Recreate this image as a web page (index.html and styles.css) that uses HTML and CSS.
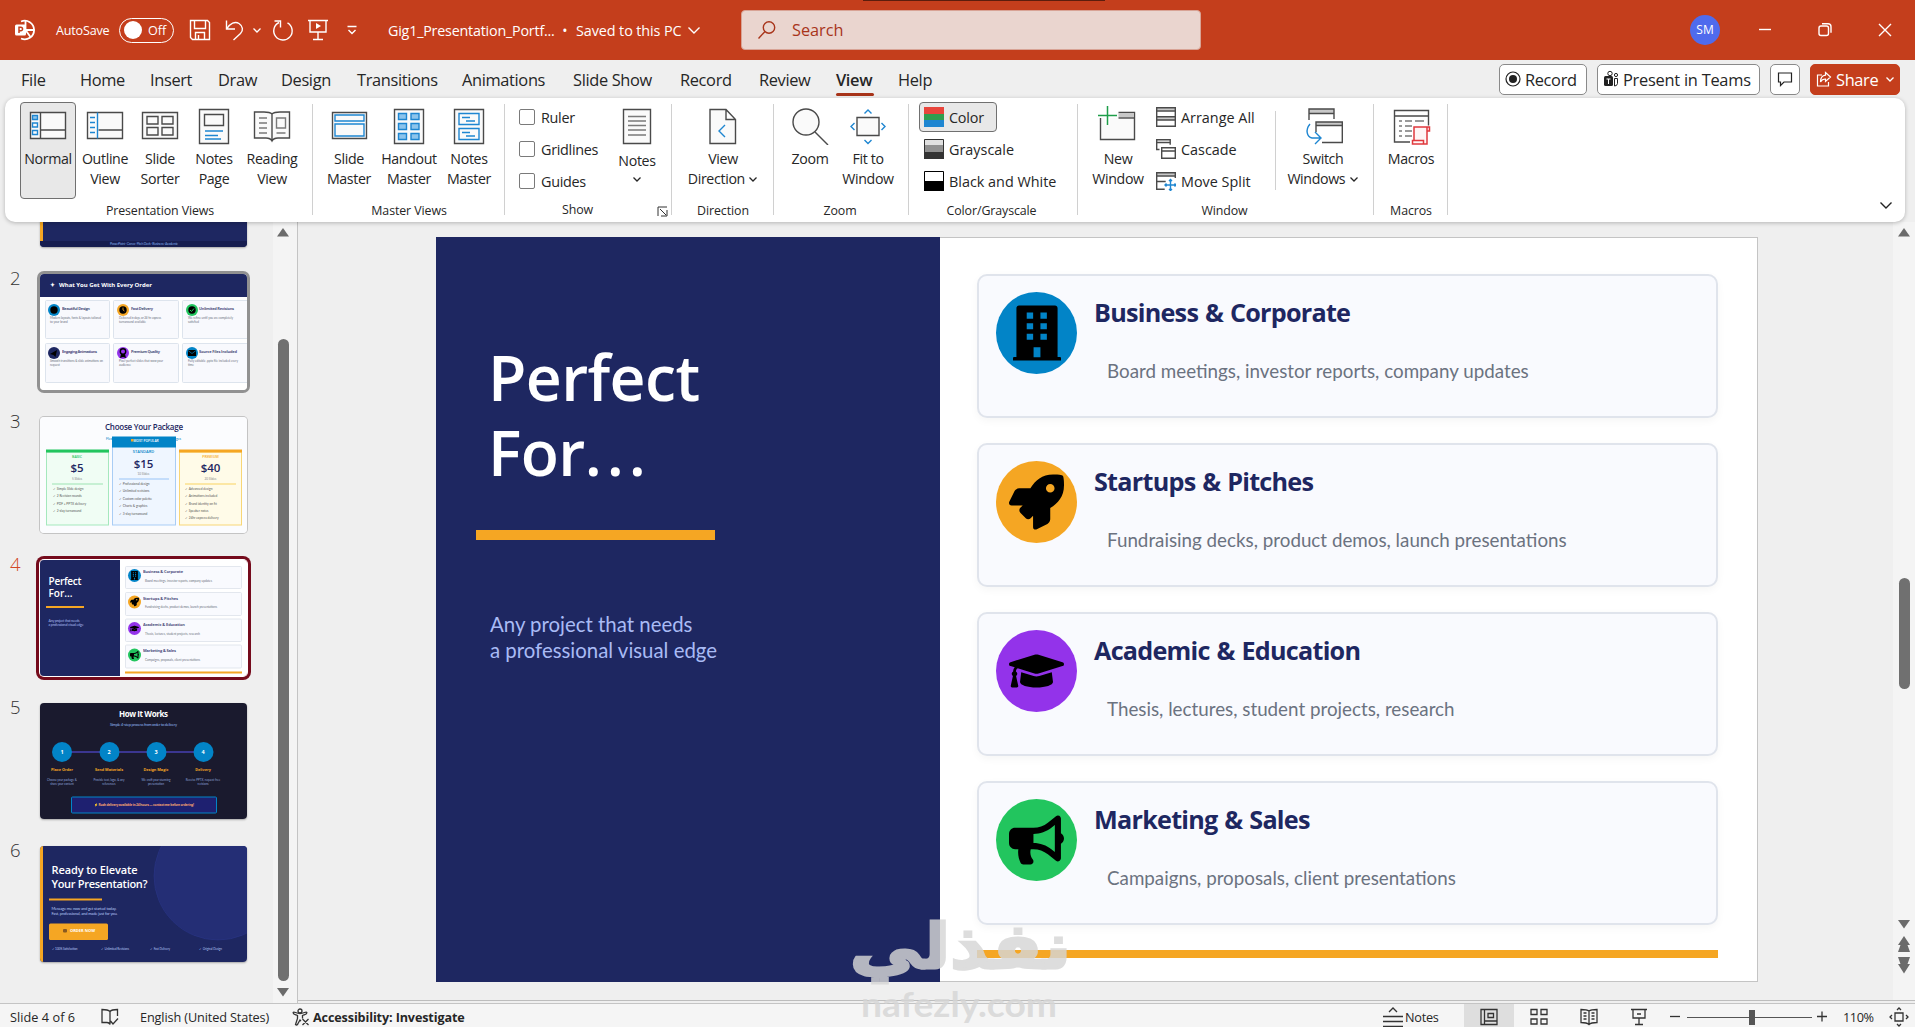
FILE: index.html
```
<!DOCTYPE html>
<html lang="en">
<head>
    <meta charset="UTF-8">
    <meta name="viewport" content="width=device-width, initial-scale=1.0">
    <title>Gig1_Presentation_Portfolio</title>
    <link rel="stylesheet" href="styles.css">
</head>
<body>
    <!-- shared icons -->
    <svg class="defs">
        <symbol id="building" viewBox="0 0 448 512">
            <path fill-rule="evenodd" d="M436 480h-20V24c0-13-11-24-24-24H56C43 0 32 11 32 24v456H12c-7 0-12 5-12 12v20h448v-20c0-7-5-12-12-12zM128 64h60v58h-60zM256 64h60v58h-60zM128 164h60v58h-60zM256 164h60v58h-60zM128 262h60v58h-60zM256 262h60v58h-60zM192 388h64v94h-64z"/>
        </symbol>
        <symbol id="rocket" viewBox="0 0 512 512">
            <path d="M505.1 19.1c-1.2-5.5-6.7-11-12.2-12.2C460.7 0 435.5 0 410.4 0 307.2 0 245.3 55.2 199.1 128H94.8c-16.3 0-35.6 11.9-42.9 26.5L2.5 253.3A28.4 28.4 0 0 0 0 264a24 24 0 0 0 24 24h103.8l-22.5 22.5c-11.4 11.4-13 32.3 0 45.2l50.9 50.9c11.2 11.2 32.2 13.2 45.3 0l22.5-22.5V488a24 24 0 0 0 24 24 28.6 28.6 0 0 0 10.7-2.5l98.7-49.4c14.6-7.3 26.5-26.5 26.5-42.9V312.8c72.6-46.3 128-108.4 128-211.1.1-25.2.1-50.4-6.8-82.6zM384 168a40 40 0 1 1 40-40 40 40 0 0 1-40 40z"/>
        </symbol>
        <symbol id="cap" viewBox="0 0 640 512">
            <path d="M622.3 153.2L343.4 67.5c-15.2-4.7-31.6-4.7-46.8 0L17.7 153.2c-23.5 7.2-23.5 38.4 0 45.6l48.6 14.9c-10.7 13.2-17.2 29.3-17.9 46.9C38.8 266.2 32 276.1 32 288c0 10.8 5.7 19.9 13.9 25.7L20.3 428.5C18.1 438.5 25.7 448 35.9 448h56.1c10.2 0 17.8-9.5 15.6-19.5L82.1 313.7C90.3 307.9 96 298.8 96 288c0-11.6-6.5-21.3-15.7-26.9.8-15 8.4-28.3 20.7-36.7L296.6 284.5c9.1 2.8 26.4 6.3 46.8 0l278.9-85.7c23.6-7.2 23.6-38.4 0-45.6zM352.8 315.1c-28.5 8.8-52.8 3.9-65.6 0l-145-44.6L128 384c0 35.4 86 64 192 64s192-28.7 192-64l-14.2-113.5-145 44.6z"/>
        </symbol>
        <symbol id="bullhorn" viewBox="0 0 576 512">
            <path d="M576 240c0-23.6-13-44-32-55.1V32c0-8.7-7-32-32-32-7.1 0-14.2 2.4-20 7l-85 68C364.3 109.2 310.7 128 256 128H64c-35.4 0-64 28.7-64 64v96c0 35.4 28.7 64 64 64h33.7c-1.4 10.5-2.2 21.1-2.2 32 0 39.8 9.3 77.4 25.6 110.9 5.2 10.7 16.5 17.1 28.4 17.1h74.3c26 0 41.7-29.8 25.9-50.6-16.4-21.5-26.2-48.4-26.2-77.4 0-11.1 1.6-21.8 4.4-32H256c54.7 0 108.3 18.8 151 53l85 68a32 32 0 0 0 20 7c24.9 0 32-22.8 32-32V295.1c19.1-11.1 32-31.5 32-55.1zm-96 141.4L447 355C393 311.8 325.1 288 256 288v-96c69.1 0 137-23.8 191-67l33-26.4v282.8z"/>
        </symbol>
        <symbol id="chev" viewBox="0 0 10 10"><path d="M1.5 3.5L5 7l3.5-3.5" fill="none" stroke="currentColor" stroke-width="1.3"/></symbol>
    </svg>

    <header class="titlebar">
        <svg class="logo" width="24" height="24" fill="none" stroke="#fff" stroke-width="1.8">
            <path d="M8 3.5a9.3 9.3 0 1 1 0 17"/><path d="M12.5 3v9h9M12.5 12l5 7"/>
            <rect x="2" y="6.5" width="11" height="11" rx="1.5" fill="#fff" stroke="none"/>
            <path d="M6 15V9.2h1.8a1.7 1.7 0 0 1 0 3.5H6" stroke="#c43e1c" stroke-width="1.5"/>
        </svg>
        <span class="autosave">AutoSave</span>
        <span class="toggle"><i></i>Off</span>
        <svg class="t-save" width="24" height="24"><path d="M2.5 2.5h17l2 2v17h-17l-2-2zM6.5 2.500v8h11v-8M7.5 21.500v-7h9v7M10.5 21v-4"/></svg>
        <svg class="t-undo" width="24" height="24"><path d="M3.5 2.5v8.500h8.500M4 10.500c3-5 8-7.500 12-5 4 2.500 4.500 7 1.500 10L10.500 22"/></svg>
        <svg class="t-chev" width="10" height="10"><use href="#chev"/></svg>
        <svg class="t-redo" width="24" height="24"><path d="M8 4.500a9.200 9.200 0 1 0 8.500 0.300M3.500 3h6v6.500"/></svg>
        <svg class="t-show" width="24" height="24"><path d="M2 2.500h20M4 2.500v11.500h16v-11.500M12 14v7.500M7 21.500h10"/><path d="M10 5v6l5-3z" fill="#fff" stroke="none"/></svg>
        <svg class="t-more" width="12" height="12"><path d="M1.5 2.500h9M2.500 6l3.500 3.500L9.500 6"/></svg>
        <span class="doc-name">Gig1_Presentation_Portf...</span>
        <span class="dot">•</span>
        <span class="saved">Saved to this PC</span>
        <svg class="t-down" width="14" height="14"><path d="M1.500 4.500l5.500 5.500 5.500-5.500"/></svg>
        <div class="search">
            <svg width="20" height="20"><circle cx="12" cy="7.500" r="5.700"/><path d="M8 11.500L1.500 18.500"/></svg>
            <span>Search</span>
        </div>
        <span class="avatar">SM</span>
        <svg class="w-min" width="24" height="24"><path d="M6 11.500h12"/></svg>
        <svg class="w-max" width="24" height="24"><rect x="6" y="8" width="9.500" height="9.500" rx="2"/><path d="M9 5.800h6a3 3 0 0 1 3 3v6"/></svg>
        <svg class="w-close" width="24" height="24"><path d="M6 6l12 12M18 6L6 18"/></svg>
        <div class="top-mark"></div>
    </header>

    <nav class="tabs">
        <a>File</a><a>Home</a><a>Insert</a><a>Draw</a><a>Design</a><a>Transitions</a><a>Animations</a><a>Slide Show</a><a>Record</a><a>Review</a><a class="active">View</a><a>Help</a>
        <div class="tab-actions">
            <button class="b-record"><svg width="16" height="18"><circle cx="8" cy="9" r="7" fill="none" stroke="#222" stroke-width="1.200"/><circle cx="8" cy="9" r="4" fill="#222"/></svg>Record</button>
            <button class="b-teams"><svg width="16" height="18"><rect x="1" y="6" width="9" height="10" rx="1.500" fill="#222"/><circle cx="7" cy="3.500" r="2.200" fill="none" stroke="#222"/><circle cx="13" cy="5" r="1.600" fill="none" stroke="#222"/><path d="M11.500 8.500h3v5a3 3 0 0 1-3 2.500z" fill="none" stroke="#222"/><path d="M3.500 9h4M5.500 9v5" stroke="#fff"/></svg>Present in Teams</button>
            <button class="b-comment"><svg width="16" height="18"><path d="M1.500 3h13v9H7l-3.500 3.500V12h-2z" fill="none" stroke="#222" stroke-width="1.200"/></svg></button>
            <button class="b-share"><svg width="16" height="18" fill="none" stroke="#fff" stroke-width="1.200"><path d="M6 5H1.500v11h11v-4"/><path d="M9.500 2.500l5 4.500-5 4.500V9C7 9 5.500 10 4.500 12c0-4 2-6.500 5-6.800z"/></svg>Share<svg class="share-chev" width="10" height="10"><use href="#chev"/></svg></button>
        </div>
    </nav>

    <section class="ribbon">
        <div class="group g-views">
            <div class="tools">
                <div class="tool on"><svg width="40" height="40"><path class="k" d="M2.500 7.500h35v26h-35zM12.500 7.500v26M12.500 25h25"/><path class="b" fill="#8cc4ec" d="M4.500 10.500h5v4h-5z"/><path class="b" d="M4.500 18h5v4h-5zM4.500 25.500h5v4h-5z"/></svg><span>Normal</span></div>
                <div class="tool"><svg width="40" height="40"><path class="k" d="M2.500 7.500h35v26h-35zM13.500 25h24"/><path class="b" d="M12.500 7.500v26M5 12.500h5M5 17.500h5M5 22.500h5M5 27.500h5"/></svg><span>Outline<br>View</span></div>
                <div class="tool t54"><svg width="40" height="40"><path class="k" d="M2.500 7.500h35v26h-35zM7 11.500h11v7.500H7zM22 11.500h11v7.500H22zM7 22.500h11v7.500H7zM22 22.500h11v7.500H22z"/></svg><span>Slide<br>Sorter</span></div>
                <div class="tool t54"><svg width="40" height="40"><path class="k" d="M5.500 4.500h29v34h-29zM10.500 9.500h19v11h-19z"/><path class="b" d="M11 26h18M11 30.500h13M11 34h16"/></svg><span>Notes<br>Page</span></div>
                <div class="tool t62"><svg width="40" height="40"><path class="k" d="M20 9c-2-2-5-2-8-2H2.500v26H14c3 0 5 1 6 3 1-2 3-3 6-3h11.500V7H28c-3 0-6 0-8 2zM20 9v26"/><path class="g" d="M7 13h8M7 18h8M7 23h8M7 28h8M24.500 13h9v10h-9zM24.500 28h9"/></svg><span>Reading<br>View</span></div>
            </div>
            <div class="label">Presentation Views</div>
        </div>
        <div class="group g-master">
            <div class="tools">
                <div class="tool"><svg width="40" height="40"><path class="k" d="M3.500 7.500h34v26h-34z"/><path class="b" d="M6 10h29v6H6zM6 19h29v12H6z"/></svg><span>Slide<br>Master</span></div>
                <div class="tool t62"><svg width="40" height="40"><path class="k" d="M5.500 4.500h29v34h-29z"/><path class="b" fill="#8cc4ec" d="M9.500 8.500h8v6h-8zM22 8.500h8v6h-8zM9.500 18.500h8v6h-8zM22 18.500h8v6h-8zM9.500 28.500h8v6h-8zM22 28.500h8v6h-8z"/></svg><span>Handout<br>Master</span></div>
                <div class="tool"><svg width="40" height="40"><path class="k" d="M5.500 4.500h29v34h-29z"/><path class="b" d="M10 8.500h20v11H10zM10 23.500h20v11H10zM13 12.500h8M17 16h9M13 27.500h8M17 31h9"/></svg><span>Notes<br>Master</span></div>
            </div>
            <div class="label">Master Views</div>
        </div>
        <div class="group g-show">
            <div class="tools">
                <div class="checks">
                    <label><i></i>Ruler</label>
                    <label><i></i>Gridlines</label>
                    <label><i></i>Guides</label>
                </div>
                <div class="tool t-notes"><svg width="40" height="40"><path class="k" d="M6.500 4.500h27v34h-27z"/><path class="g" d="M11 11.500h18M11 16h18M11 20.500h18M11 25h18M11 30h18"/></svg><span>Notes</span><svg width="10" height="10"><use href="#chev"/></svg></div>
            </div>
            <div class="label">Show<svg class="launcher" width="11" height="11"><path d="M1 10V1h9M3 3l6 6M10 4v6H4" fill="none" stroke="#333"/></svg></div>
        </div>
        <div class="group g-dir">
            <div class="tools">
                <div class="tool"><svg width="40" height="40"><path class="k" d="M7 4.500h16l9.500 10v24H7zM23 4.500v10h9.500"/><path class="b" d="M22 20l-6 6 6 6"/></svg><span>View<br>Direction <svg width="10" height="10"><use href="#chev"/></svg></span></div>
            </div>
            <div class="label">Direction</div>
        </div>
        <div class="group g-zoom">
            <div class="tools">
                <div class="tool"><svg width="40" height="40"><circle class="k" cx="16" cy="17" r="13"/><path class="k" d="M25 27l13 13"/></svg><span>Zoom</span></div>
                <div class="tool"><svg width="40" height="40"><path class="k" d="M9 12.500h22v18H9z"/><path class="b" d="M16.500 8.500L20 5l3.500 3.500M16.500 35l3.500 3.500 3.500-3.500M6.500 18L3 21.500 6.500 25M33.500 18l3.500 3.500-3.500 3.500"/></svg><span>Fit to<br>Window</span></div>
            </div>
            <div class="label">Zoom</div>
        </div>
        <div class="group g-color">
            <div class="tools list">
                <div class="row on"><svg width="20" height="20"><path fill="#e8453c" d="M0 0h20v7H0z"/><path fill="#2e9e4f" d="M0 7h20v6H0z"/><path fill="#1e86d1" d="M0 13h20v7H0z"/></svg>Color</div>
                <div class="row"><svg width="20" height="20"><path fill="#e0e0e0" d="M0 0h20v7H0z"/><path fill="#909090" d="M0 6h20v7H0z"/><path fill="#333" d="M0 13h20v7H0z"/><path fill="none" stroke="#333" d="M.5.5h19v19H.5z"/></svg>Grayscale</div>
                <div class="row"><svg width="20" height="20"><path fill="#fff" stroke="#000" d="M.5.5h19v19H.5z"/><path d="M0 10h20v10H0z"/></svg>Black and White</div>
            </div>
            <div class="label">Color/Grayscale</div>
        </div>
        <div class="group g-window">
            <div class="tools">
                <div class="tool"><svg width="40" height="40"><path class="k" d="M2.500 13v21.500h34v-27h-16"/><path fill="#c8c8c8" d="M20.500 8h15.500v4.500H20.500z"/><path class="k" d="M20.500 13h16"/><path d="M9.500 1v19M0 10.500h19" stroke="#fff" stroke-width="5"/><path d="M9.500 1v19M0 10.500h19" stroke="#1e9e4a" stroke-width="1.500"/></svg><span>New<br>Window</span></div>
                <div class="list">
                    <div class="row"><svg width="20" height="20"><path fill="#c8c8c8" d="M.5.5h19v3H.5zM.5 10h19v3H.5z"/><path class="k" d="M.7.7h18.600v18.600H.7zM.7 4h18.600M.7 9.800h18.600M.7 13h18.600"/></svg>Arrange All</div>
                    <div class="row"><svg width="20" height="20"><path class="k" d="M3.500 10.500H.7V.7h13.500v5M.7 3.500h13.500M5.700 8.700h13.600v10.600H5.700zM5.700 12h13.600"/></svg>Cascade</div>
                    <div class="row"><svg width="20" height="20"><path fill="#c8c8c8" d="M.5 1.500h19v3H.5z"/><path class="k" d="M19.300 7V1.700H.7v16.600h8M.7 5h18.600M.7 10.500h9"/><path class="b" d="M14.500 8.500v11M9 14h11M13 10l1.500-1.500L16 10M13 18l1.500 1.500L16 18M10.500 12.500L9 14l1.500 1.500M18.500 12.500L20 14l-1.500 1.500"/></svg>Move Split</div>
                </div>
                <div class="tool t-switch"><svg width="40" height="40"><path fill="#c8c8c8" d="M6 4h25v4H6zM13 17h26v3H13z"/><path class="k line" d="M6 15V4h25v10M6 8.500h25M13 27V17h26.300v20.500H19M13 20.500h26"/><path class="b" d="M7 19c-5 6-3 13 2 14h8M12 27l6 6-6 6"/></svg><span>Switch<br>Windows <svg width="10" height="10"><use href="#chev"/></svg></span></div>
            </div>
            <div class="label">Window</div>
        </div>
        <div class="group g-macros">
            <div class="tools">
                <div class="tool"><svg width="40" height="40"><path class="k line" d="M19 37H3.500V5.500h34v15M3.500 11h34"/><path class="g" d="M8 16h3M14 16h7M24 16h9M8 21h3M14 21h7M8 26h3M14 26h7M8 31h3M14 31h7"/><path d="M23 36V22h15.500v4H36v13H21.500v-3.500h11V39M36 26v-4" fill="#fff5f5" stroke="#e0393e" stroke-width="1.500"/></svg><span>Macros</span></div>
            </div>
            <div class="label">Macros</div>
        </div>
        <svg class="collapse" width="14" height="14"><path d="M1.500 4.500l5.500 5.500 5.500-5.500" fill="none" stroke="#222" stroke-width="1.400"/></svg>
    </section>

    <main class="workspace">
        <aside class="panel">
            <div class="thumbs">
                <div class="item first"><span class="num"></span>
                    <svg class="thumb" viewBox="0 0 207 116"><rect width="207" height="116" fill="#1e2761"/><rect width="3" height="110" fill="#f5a623"/><rect y="110" width="207" height="6" fill="#161d4f"/><text x="70" y="113.500" font-size="3.500" fill="#7ea4e0" textLength="68">PowerPoint · Canva · Pitch Deck · Business · Academic</text></svg>
                </div>
                <div class="item seen"><span class="num">2</span>
                    <svg class="thumb" viewBox="0 0 207 116">
                        <rect width="207" height="116" fill="#fff"/><rect width="207" height="23" fill="#1e2761"/>
                        <text class="h" x="10" y="13" font-size="5.500" fill="#fff">✦</text>
                        <text class="h" x="19" y="13" font-size="6" fill="#fff" textLength="93">What You Get With Every Order</text>
                        <g fill="#f8f9fd" stroke="#d6dde8" stroke-width=".8"><rect x="5.500" y="26.500" width="64" height="38" rx="1"/><rect x="73.500" y="26.500" width="65" height="38" rx="1"/><rect x="142.500" y="26.500" width="70" height="38" rx="1"/><rect x="5.500" y="69.500" width="64" height="39" rx="1"/><rect x="73.500" y="69.500" width="65" height="39" rx="1"/><rect x="142.500" y="69.500" width="70" height="39" rx="1"/></g>
                        <circle cx="14" cy="36" r="6" fill="#0284c7"/><circle cx="83" cy="36" r="6" fill="#f5a623"/><circle cx="152" cy="36" r="6" fill="#22c55e"/>
                        <circle cx="14" cy="79" r="6" fill="#1e2761"/><circle cx="83" cy="79" r="6" fill="#9333ea"/><circle cx="152" cy="79" r="6" fill="#0284c7"/>
                        <circle cx="14" cy="36" r="3.700"/><circle cx="83" cy="36" r="3.700"/><path d="M83 33.500v2.500l1.500 1" stroke="#f5a623" stroke-width=".8" fill="none"/><circle cx="152" cy="36" r="3.700"/><path d="M150 36l1.500 1.500 2.500-3" stroke="#22c55e" fill="none"/>
                        <path d="M10 80l7-4-1.500 7-2-2zM81 80l-1 4 3-1 3 1-1-4z"/><circle cx="83" cy="77.500" r="2.700" fill="none" stroke="#000" stroke-width="1.400"/><path d="M148 76h8v6h-8z"/><path d="M148 76.500l4 3 4-3" fill="none" stroke="#0284c7" stroke-width=".7"/>
                        <g class="h soft" fill="#1e2761" font-size="4"><text x="22" y="35.500" textLength="28">Beautiful Design</text><text x="91" y="35.500" textLength="22">Fast Delivery</text><text x="159" y="35.500" textLength="35">Unlimited Revisions</text><text x="22" y="78.500" textLength="35">Engaging Animations</text><text x="91" y="78.500" textLength="29">Premium Quality</text><text x="159" y="78.500" textLength="38">Source Files Included</text></g>
                        <g fill="#6b7280" font-size="3"><text x="10" y="44.500" textLength="51">Modern layouts, fonts &amp; layouts tailored</text><text x="10" y="48.500">to your brand</text><text x="79" y="44.500" textLength="42">Delivered in days, or 24-hr express</text><text x="79" y="48.500">turnaround available</text><text x="148" y="44.500" textLength="45">We refine until you are completely</text><text x="148" y="48.500">satisfied</text><text x="10" y="87.500" textLength="53">Smooth transitions &amp; slide animations on</text><text x="10" y="91.500">request</text><text x="79" y="87.500" textLength="44">Pixel-perfect slides that wow your</text><text x="79" y="91.500">audience</text><text x="148" y="87.500" textLength="50">Fully editable .pptx file included every</text><text x="148" y="91.500">time</text></g>
                    </svg>
                </div>
                <div class="item"><span class="num">3</span>
                    <svg class="thumb framed" viewBox="0 0 207 116">
                        <rect width="207" height="116" fill="#fbfcfe"/>
                        <text class="h semi" x="65" y="13" font-size="8" fill="#1e2761" textLength="78">Choose Your Package</text>
                        <text x="66" y="22.500" font-size="3.500" fill="#0284c7" textLength="75">Flexible plans for every need — no hidden charges</text>
                        <rect x="6.500" y="35" width="62" height="73" fill="#f0fdf4" stroke="#a5e8bd"/><rect x="6" y="32.500" width="63" height="3" fill="#22c55e"/>
                        <rect x="72.500" y="28" width="63" height="80" fill="#eff6ff" stroke="#a9cdf5"/><rect x="72" y="19.500" width="64" height="11" fill="#0284c7"/>
                        <rect x="139.500" y="35" width="62" height="73" fill="#fffbe8" stroke="#f8d676"/><rect x="139" y="32.500" width="63" height="3" fill="#f5a623"/>
                        <g class="h semi" text-anchor="middle" fill="#1e2761"><text x="37" y="54.500" font-size="11.500">$5</text><text x="103.500" y="50.500" font-size="11.500">$15</text><text x="170.500" y="54.500" font-size="11.500">$40</text><text x="37" y="40.500" font-size="3.500" fill="#22c55e">BASIC</text><text x="103.500" y="36" font-size="4" fill="#0284c7">STANDARD</text><text x="170.500" y="40.500" font-size="3.500" fill="#f5a623">PREMIUM</text><text x="106" y="24.500" font-size="3.300" fill="#fff">MOST POPULAR</text></g>
                        <rect x="91" y="22" width="2.500" height="2.500" fill="#f5a623"/>
                        <g text-anchor="middle" fill="#888" font-size="3"><text x="37" y="62.500">5 Slides</text><text x="103.500" y="57.500">10 Slides</text><text x="170.500" y="62.500">20 Slides</text></g>
                        <path d="M12 67h51" stroke="#b8ebc9" stroke-width="1.500"/><path d="M79 62h50" stroke="#b6d5fa" stroke-width="1.500"/><path d="M145 67h51" stroke="#fbe08e" stroke-width="1.500"/>
                        <g fill="#555" font-size="3.200"><text x="13" y="72.500">✓ Simple Slide design</text><text x="13" y="79.500">✓ 2 Revision rounds</text><text x="13" y="87.500">✓ PDF + PPTX delivery</text><text x="13" y="94.500">✓ 2-day turnaround</text><text x="79" y="67.500">✓ Professional design</text><text x="79" y="74.500">✓ Unlimited revisions</text><text x="79" y="82.500">✓ Custom color palette</text><text x="79" y="89.500">✓ Charts &amp; graphics</text><text x="79" y="97.500">✓ 3-day turnaround</text><text x="145" y="72.500">✓ Advanced design</text><text x="145" y="79.500">✓ Animations included</text><text x="145" y="87.500">✓ Brand identity on fit</text><text x="145" y="94.500">✓ Speaker notes</text><text x="145" y="101.500">✓ 24hr express delivery</text></g>
                    </svg>
                </div>
                <div class="item current"><span class="num">4</span>
                    <svg class="thumb" viewBox="0 0 207 116">
                        <rect width="207" height="116" fill="#fff"/><rect width="80" height="116" fill="#1e2761"/>
                        <text class="h semi" x="8.500" y="25" font-size="10" fill="#fff" textLength="33">Perfect</text><text class="h semi" x="8.500" y="37" font-size="10" fill="#fff" textLength="24">For...</text>
                        <rect x="6" y="46" width="38" height="2" fill="#f5a623"/>
                        <text x="8.500" y="61.500" font-size="3.500" fill="#a9bbf0" textLength="31">Any project that needs</text><text x="8.500" y="65.500" font-size="3.500" fill="#a9bbf0" textLength="35">a professional visual edge</text>
                        <g fill="#f9fafe" stroke="#dce1ea" stroke-width=".8"><rect x="85.500" y="6.500" width="116" height="22" rx="1"/><rect x="85.500" y="32.500" width="116" height="23" rx="1"/><rect x="85.500" y="59" width="116" height="22.500" rx="1"/><rect x="85.500" y="85" width="116" height="23" rx="1"/></g>
                        <circle cx="94.500" cy="15.500" r="6.500" fill="#0284c7"/><circle cx="94.500" cy="42" r="6.500" fill="#f5a623"/><circle cx="94.500" cy="68.500" r="6.500" fill="#9333ea"/><circle cx="94.500" cy="95" r="6.500" fill="#22c55e"/>
                        <use href="#building" x="90" y="11" width="9" height="9"/><use href="#rocket" x="90" y="37.500" width="9" height="9"/><use href="#cap" x="90" y="64" width="9" height="9"/><use href="#bullhorn" x="90" y="90.500" width="9" height="9"/>
                        <g class="h soft" fill="#1e2761" font-size="4"><text x="103" y="13" textLength="40">Business &amp; Corporate</text><text x="103" y="40" textLength="35">Startups &amp; Pitches</text><text x="103" y="66" textLength="42">Academic &amp; Education</text><text x="103" y="92" textLength="33">Marketing &amp; Sales</text></g>
                        <g fill="#6b7280" font-size="3"><text x="105" y="22" textLength="67">Board meetings, investor reports, company updates</text><text x="105" y="48" textLength="72">Fundraising decks, product demos, launch presentations</text><text x="105" y="74.500" textLength="55">Thesis, lectures, student projects, research</text><text x="105" y="101" textLength="55">Campaigns, proposals, client presentations</text></g>
                        <rect x="85" y="111.500" width="117" height="2" fill="#f5a623"/>
                    </svg>
                </div>
                <div class="item"><span class="num">5</span>
                    <svg class="thumb" viewBox="0 0 207 116">
                        <rect width="207" height="116" fill="#1a1a2e"/>
                        <text class="h" x="79" y="14" font-size="8" fill="#fff" textLength="49">How It Works</text>
                        <text x="70" y="22.500" font-size="4" fill="#8fb4ee" textLength="67">Simple 4-step process from order to delivery</text>
                        <path d="M22 49h141" stroke="#3b3690" stroke-width="2"/>
                        <g fill="#0284c7"><circle cx="22" cy="49" r="10"/><circle cx="69.500" cy="49" r="10"/><circle cx="116.500" cy="49" r="10"/><circle cx="163.500" cy="49" r="10"/></g>
                        <g class="h" fill="#fff" font-size="5.500" text-anchor="middle"><text x="22" y="50.500">1</text><text x="69" y="50.500">2</text><text x="116" y="50.500">3</text><text x="163" y="50.500">4</text></g>
                        <g class="h" fill="#f5a623" font-size="3.800" text-anchor="middle"><text x="22" y="68">Place Order</text><text x="69" y="68">Send Materials</text><text x="116" y="68">Design Magic</text><text x="163" y="68">Delivery</text></g>
                        <g fill="#8fa6dc" font-size="2.900" text-anchor="middle"><text x="22" y="77.500">Choose your package &amp;</text><text x="22" y="81.500">share your content</text><text x="69" y="77.500">Provide text, logo, &amp; any</text><text x="69" y="81.500">references</text><text x="116" y="77.500">We craft your stunning</text><text x="116" y="81.500">presentation</text><text x="163" y="77.500">Receive PPTX, request free</text><text x="163" y="81.500">revisions</text></g>
                        <rect x="31.500" y="94" width="145" height="16" rx="1" fill="#1e2070" stroke="#0284c7"/>
                        <text class="h" x="54" y="102.500" font-size="3.300" fill="#f0a070" textLength="100">⚡ Rush delivery available in 24 hours — contact me before ordering!</text>
                    </svg>
                </div>
                <div class="item"><span class="num">6</span>
                    <svg class="thumb" viewBox="0 0 207 116">
                        <rect width="207" height="116" fill="#1e2761"/><circle cx="178" cy="30" r="64" fill="#242e75" stroke="#2d398a" stroke-width=".5"/><rect width="3" height="116" fill="#f5a623"/>
                        <text class="h semi" x="11.500" y="28" font-size="11" fill="#fff" textLength="86">Ready to Elevate</text><text class="h semi" x="11.500" y="42" font-size="11" fill="#fff" textLength="96">Your Presentation?</text>
                        <rect x="9" y="52.500" width="53" height="2" fill="#f5a623"/>
                        <text x="11.500" y="64" font-size="4" fill="#b5c6f3" textLength="65">Message me now and get started today.</text><text x="11.500" y="69" font-size="4" fill="#b5c6f3" textLength="66">Fast, professional, and made just for you.</text>
                        <rect x="9" y="77.500" width="59" height="16.500" rx="1.500" fill="#f5a623"/><rect x="23" y="83" width="4" height="3.500" rx="1" fill="#8a5a20"/>
                        <text class="h" x="30" y="86" font-size="4" fill="#fff" textLength="25">ORDER NOW</text>
                        <g fill="#b5c6f3" font-size="3"><text x="11.500" y="103.500" textLength="26">✓ 100% Satisfaction</text><text x="61" y="103.500" textLength="28">✓ Unlimited Revisions</text><text x="110" y="103.500" textLength="20">✓ Fast Delivery</text><text x="159" y="103.500" textLength="23">✓ Original Design</text></g>
                    </svg>
                </div>
            </div>
            <div class="scroll">
                <svg width="12" height="9"><path d="M6 0l6 8.500H0z"/></svg>
                <div class="bar"></div>
                <svg width="12" height="9"><path d="M6 8.500L12 0H0z"/></svg>
            </div>
        </aside>

        <div class="canvas">
            <article class="slide">
                <div class="slide-left">
                    <h1>Perfect<br>For<span>...</span></h1>
                    <div class="rule"></div>
                    <p>Any project that needs<br>a professional visual edge</p>
                </div>
                <div class="slide-right">
                    <div class="card">
                        <div class="badge blue"><svg width="48" height="56"><use href="#building"/></svg></div>
                        <div class="card-text"><h2>Business &amp; Corporate</h2><p>Board meetings, investor reports, company updates</p></div>
                    </div>
                    <div class="card">
                        <div class="badge orange"><svg width="55" height="56"><use href="#rocket"/></svg></div>
                        <div class="card-text"><h2>Startups &amp; Pitches</h2><p>Fundraising decks, product demos, launch presentations</p></div>
                    </div>
                    <div class="card">
                        <div class="badge purple"><svg width="55" height="46"><use href="#cap"/></svg></div>
                        <div class="card-text"><h2>Academic &amp; Education</h2><p>Thesis, lectures, student projects, research</p></div>
                    </div>
                    <div class="card">
                        <div class="badge green"><svg width="55" height="50"><use href="#bullhorn"/></svg></div>
                        <div class="card-text"><h2>Marketing &amp; Sales</h2><p>Campaigns, proposals, client presentations</p></div>
                    </div>
                    <div class="bottom-rule"></div>
                </div>
            </article>
            <div class="scroll main-scroll">
                <svg width="12" height="9"><path d="M6 0l6 8.500H0z"/></svg>
                <div class="bar"></div>
                <svg width="12" height="9"><path d="M6 8.500L12 0H0z"/></svg>
                <svg class="dbl" width="12" height="17"><path d="M6 0l6 9H9.500l2.500 7H0l2.500-7H0z"/></svg>
                <svg class="dbl" width="12" height="17"><path d="M0 0h12L9.500 7H12l-6 9.500L0 7h2.500z"/></svg>
            </div>
        </div>
    </main>

    <footer class="status">
        <span class="s-slide">Slide 4 of 6</span>
        <svg class="s-book" width="18" height="18"><path d="M9 3.500C7 1.500 4 1.500 1 1.500v13h5c1.500 0 2.500.5 3 2M9 3.500c1.500-2 4-2 7.500-2V8M9 3.500v13M9.500 13l2.500 3 5-5.500"/></svg>
        <span class="s-lang">English (United States)</span>
        <svg class="s-acc" width="18" height="18"><circle cx="8" cy="3" r="2"/><path d="M1 4.500c0 2 2 2 4.500 3v3l-2 6c1 1 2 .5 2.500-1L8 12l1 1M15 4.500c0 2-2 2-4.500 3v3M1 4.500c1-1.500 3 1 7 1s6-2.500 7-1M10.500 11l6 6M16.500 11l-6 6"/></svg>
        <b>Accessibility: Investigate</b>
        <div class="s-right">
            <svg class="s-notes" width="20" height="22"><path d="M6 6l4-4 4 4M0 10.500h20M0 15.500h20M0 20.500h20"/></svg>
            <span class="s-nlabel">Notes</span>
            <span class="view on"><svg width="18" height="18"><path d="M1 1.500h16v15H1zM4.500 1.500v15M4.500 13H17M8 5.500h5.500v4H8z"/></svg></span>
            <span class="view"><svg width="18" height="18"><path d="M1 1.500h6v5H1zM11 1.500h6v5h-6zM1 11h6v5H1zM11 11h6v5h-6z"/></svg></span>
            <span class="view"><svg width="18" height="18"><path d="M9 3C7 1.500 4 1.500 1 1.500v13c3 0 6 0 8 2 2-2 5-2 8-2v-13c-3 0-6 0-8 1.500zM9 3v13M3.500 5h3M3.500 8h3M3.500 11h3M11.500 5h3M11.500 8h3M11.500 11h3"/></svg></span>
            <span class="view"><svg width="18" height="18"><path d="M1 1.500h16M3 1.500v8.500h12V1.500M9 10v6.500M5 16.500h8M7 6h4"/></svg></span>
            <svg class="s-minus" width="12" height="12"><path d="M1 5.500h10"/></svg>
            <div class="slider"><i></i></div>
            <svg class="s-plus" width="12" height="12"><path d="M1 5.500h10M6 .5v10"/></svg>
            <span class="s-pct">110%</span>
            <svg class="s-fit" width="20" height="20"><path d="M6 6h8v8H6zM8 3l2-2 2 2M8 17l2 2 2-2M3 8l-2 2 2 2M17 8l2 2-2 2"/></svg>
        </div>
    </footer>

    <svg class="watermark" width="230" height="122" viewBox="0 0 230 122">
        <text class="wm-ar" x="4" y="64" direction="ltr" textLength="221" lengthAdjust="spacingAndGlyphs">نفذلي</text>
        <text class="wm-en" x="15" y="113" textLength="196" lengthAdjust="spacingAndGlyphs">nafezly.com</text>
    </svg>
</body>
</html>
```
FILE: styles.css
```
* {
    box-sizing: border-box;
}
body {
    margin: 0;
    width: 1915px;
    height: 1027px;
    overflow: hidden;
    position: relative;
    display: flex;
    flex-direction: column;
    background-color: #efefef;
    color: #262626;
    font-family: "Open Sans", "Liberation Sans", sans-serif;
}
h1, h2, p {
    margin: 0;
}
svg {
    display: block;
    flex: none;
}
.defs {
    position: absolute;
    width: 0;
    height: 0;
}

/* title bar */
.titlebar {
    position: relative;
    height: 60px;
    flex: none;
    display: flex;
    align-items: center;
    padding: 0 18px 0 13px;
    background-color: #c43e1c;
    color: #fff;
    white-space: nowrap;
}
.titlebar > svg:not(.logo) {
    fill: none;
    stroke: #fff;
    stroke-width: 1.4;
}
.autosave {
    width: 54px;
    margin-left: 19px;
    font-size: 12.6px;
    letter-spacing: -0.2px;
}
.toggle {
    display: flex;
    align-items: center;
    width: 55px;
    height: 25px;
    margin-left: 9px;
    padding-left: 4px;
    border: 1px solid #fff;
    border-radius: 13px;
    font-size: 12.6px;
}
.toggle i {
    width: 18px;
    height: 18px;
    margin-right: 6px;
    border-radius: 50%;
    background-color: #fff;
}
.t-save { margin-left: 14px; }
.t-undo { margin-left: 11px; }
.t-chev { margin-left: 5px; }
.t-redo { margin-left: 9px; }
.t-show { margin-left: 11px; }
.t-more { margin-left: 16px; }
.doc-name {
    width: 166px;
    margin-left: 30px;
    font-size: 14.3px;
    letter-spacing: -0.2px;
}
.dot {
    width: 22px;
    text-align: center;
    font-size: 14px;
}
.saved {
    width: 106px;
    font-size: 14.4px;
    letter-spacing: -0.1px;
}
.t-down { margin-left: 5px; }
.search {
    display: flex;
    align-items: center;
    width: 460px;
    height: 40px;
    margin-left: 40px;
    padding: 0 0 1px 15px;
    border: 1px solid #d8a395;
    border-radius: 4px;
    background-color: #ead5cf;
    color: #a8341a;
    font-size: 16.3px;
}
.search svg {
    margin-right: 15px;
    fill: none;
    stroke: #a8341a;
    stroke-width: 1.4;
}
.avatar {
    width: 30px;
    height: 30px;
    margin-left: auto;
    border-radius: 50%;
    background-color: #4f6bed;
    font-size: 12px;
    line-height: 30px;
    text-align: center;
}
.w-min { margin-left: 33px; }
.w-max, .w-close { margin-left: 36px; }
.top-mark {
    position: absolute;
    top: 0;
    left: 863px;
    width: 242px;
    height: 1px;
    background-color: #5c1d0d;
}

/* tabs */
.tabs {
    height: 38px;
    flex: none;
    display: grid;
    grid-template-columns: 59px 70px 68px 63px 76px 105px 111px 107px 79px 77px 62px auto 1fr;
    align-items: center;
    padding: 0 15px 0 21px;
    font-size: 16.4px;
    letter-spacing: -0.35px;
}
.tabs a {
    position: relative;
    line-height: 36px;
    padding-top: 2px;
}
.tabs .active {
    font-weight: 600;
}
.active::after {
    content: "";
    position: absolute;
    left: 0;
    bottom: 2px;
    width: 38px;
    height: 3px;
    border-radius: 2px;
    background-color: #a8341a;
}
.tab-actions {
    display: flex;
    justify-content: flex-end;
}
.tab-actions button {
    display: flex;
    align-items: center;
    height: 31px;
    padding: 0 5px;
    border: 1px solid #8a8a8a;
    border-radius: 5px;
    background-color: #fff;
    color: #262626;
    font: inherit;
    letter-spacing: -0.35px;
    white-space: nowrap;
}
.tab-actions svg {
    margin-right: 4px;
}
.b-record { width: 88px; }
.tab-actions .b-teams {
    width: 163px;
    margin-left: 10px;
    letter-spacing: -0.25px;
}
.tab-actions .b-comment {
    width: 30px;
    margin-left: 10px;
    padding: 0 6px;
}
.tab-actions .b-share {
    width: 90px;
    margin-left: 10px;
    border-color: #c43e1c;
    background-color: #c43e1c;
    color: #fff;
}
.tab-actions .share-chev {
    margin: 0 0 0 7px;
}

/* ribbon */
.ribbon {
    position: relative;
    z-index: 1;
    height: 124px;
    flex: none;
    display: flex;
    margin: 0 10px 0 5px;
    padding-top: 4px;
    border-radius: 10px;
    background-color: #fff;
    box-shadow: 0 1px 4px rgba(0,0,0,0.25);
}
.group {
    position: relative;
    display: flex;
    flex-direction: column;
}
.group::after {
    content: "";
    position: absolute;
    right: 0;
    top: 2px;
    width: 1px;
    height: 111px;
    background-color: #d0d0d0;
}
.tools {
    display: flex;
    justify-content: center;
    height: 99px;
}
.label {
    position: relative;
    font-size: 12.4px;
    line-height: 20px;
    letter-spacing: -0.1px;
    text-align: center;
}
.g-views { width: 308px; }
.g-master { width: 192px; }
.g-show { width: 167px; }
.g-dir { width: 102px; }
.g-zoom { width: 135px; }
.g-color { width: 169px; }
.g-window { width: 296px; }
.g-macros { width: 74px; }
.g-views .tools {
    justify-content: flex-start;
    padding-left: 15px;
}
.g-views .label { padding-left: 2px; }
.tool {
    width: 58px;
    height: 97px;
    display: flex;
    flex-direction: column;
    align-items: center;
    padding-top: 2px;
    border: 1px solid transparent;
    border-radius: 4px;
    font-size: 14.2px;
    line-height: 20px;
    letter-spacing: -0.35px;
    text-align: center;
    white-space: nowrap;
}
.tool > span {
    margin-top: 4px;
}
.tool span svg {
    display: inline-block;
}
.g-views .tool { width: 56px; }
.g-views .tool.on { margin-right: 1px; }
.tools .t62, .g-views .t62 { width: 62px; }
.g-views .t54 { width: 54px; }
.tool.on, .row.on {
    border-color: #707070;
    background-color: #e8e8e8;
}
.k { fill: #fafafa; stroke: #4a4a4a; stroke-width: 1.4; }
.g { fill: none; stroke: #7a7a7a; stroke-width: 1.4; }
.b { stroke: #1e86d1; stroke-width: 1.4; }
.b:not([fill]) { fill: none; }
.row .k, .line { fill: none; }
.checks {
    width: 97px;
    margin-top: -1px;
    font-size: 14.4px;
    letter-spacing: -0.3px;
}
.checks label {
    display: flex;
    align-items: center;
    height: 32px;
}
.checks i {
    width: 16px;
    height: 16px;
    margin-right: 6px;
    border: 1px solid #7a7a7a;
    border-radius: 2px;
}
.g-show .tools {
    justify-content: flex-start;
    padding-left: 14px;
}
.g-show .label {
    padding-right: 22px;
    top: -1px;
}
.t-notes {
    width: 42px;
}
.t-notes > span {
    margin: 6px 0 3px;
}
.launcher {
    position: absolute;
    right: 4px;
    top: 6px;
}
.g-zoom .tools {
    justify-content: flex-start;
    padding-left: 7px;
}
.g-zoom .label {
    padding-right: 3px;
}
.list {
    flex-direction: column;
    font-size: 14.4px;
    letter-spacing: 0;
}
.tools.list {
    justify-content: flex-start;
    padding-left: 10px;
}
.g-color .label {
    padding-right: 4px;
}
.row {
    display: flex;
    align-items: center;
    height: 30px;
    margin-bottom: 2px;
    padding: 0 10px 0 4px;
    border: 1px solid transparent;
    border-radius: 4px;
    white-space: nowrap;
}
.row svg {
    margin-right: 5px;
}
.row.on {
    width: 78px;
    letter-spacing: -0.2px;
}
.g-window .tools {
    justify-content: flex-start;
    padding-left: 11px;
}
.g-window .label {
    padding-right: 3px;
}
.g-window .list {
    width: 129px;
    padding-left: 4px;
    height: 98px;
    position: relative;
}
.g-window .list::after {
    content: "";
    position: absolute;
    right: 0;
    top: 9px;
    width: 1px;
    height: 79px;
    background-color: #d0d0d0;
}
.t-switch {
    width: 94px;
}
.collapse {
    margin: 96px 12px 0 auto;
}

/* workspace */
.workspace {
    flex: 1;
    min-height: 0;
    display: flex;
}
.panel {
    width: 298px;
    display: flex;
    justify-content: space-between;
    border-right: 1px solid #c4c4c4;
    overflow: hidden;
}
.thumbs {
    display: flex;
    flex-direction: column;
    gap: 27px;
    margin-top: -91px;
    padding-left: 10px;
}
.item {
    display: flex;
    height: 116px;
}
.num {
    width: 30px;
    margin-top: -9px;
    font-size: 18.5px;
    font-weight: 300;
    color: #333;
}
.thumb {
    width: 207px;
    height: 116px;
    border-radius: 4px;
    box-shadow: 0 1px 2px rgba(0,0,0,0.3);
    font-family: Lato, sans-serif;
}
.framed {
    box-shadow: 0 0 0 1px #c4c4c4;
}
.h {
    font-family: "Open Sans", sans-serif;
    font-weight: 700;
}
.semi {
    font-weight: 600;
}
.soft {
    opacity: 0.8;
}
.seen .thumb {
    box-shadow: 0 0 0 3px #919191;
}
.current .thumb {
    box-shadow: 0 0 0 1px #fff, 0 0 0 4px #750b1c;
}
.current .num {
    color: #d24726;
}
.scroll {
    width: 24px;
    display: flex;
    flex-direction: column;
    align-items: center;
    padding: 6px 4px 5px 0;
    background-color: #f4f4f4;
    fill: #6b6b6b;
}
.scroll .bar {
    width: 11px;
    height: 642px;
    margin: 102px 0 7px;
    border-radius: 6px;
    background-color: #707070;
}

.canvas {
    flex: 1;
    display: flex;
    justify-content: space-between;
    height: 779px;
    padding-left: 138px;
    border-bottom: 1px solid #bdbdbd;
}
.slide {
    display: flex;
    width: 1322px;
    height: 745px;
    margin-top: 15px;
    border: 1px solid #c4c4c4;
    border-left: none;
    background-color: #fff;
}
.slide-left {
    width: 504px;
    margin: -1px 0;
    padding: 102px 0 0 40px;
    background-color: #1e2761;
    color: #fff;
}
.slide-left h1 {
    padding-left: 12px;
    font-size: 62.5px;
    line-height: 75px;
    font-weight: 600;
    letter-spacing: -0.6px;
}
.slide-left h1 span {
    letter-spacing: 5px;
}
.rule {
    width: 239px;
    height: 10px;
    margin-top: 41px;
    background-color: #f5a623;
}
.slide-left p {
    margin-top: 71px;
    padding-left: 14px;
    font-family: Lato, sans-serif;
    font-size: 20.4px;
    line-height: 26px;
    color: #a9bbf5;
}
.slide-right {
    flex: 1;
    display: flex;
    flex-direction: column;
    gap: 25px;
    padding: 36px 39px 0 37px;
}
.card {
    display: flex;
    height: 144px;
    padding: 16px 17px;
    border: 2px solid #e0e4ec;
    border-radius: 10px;
    background-color: #f9fafe;
    box-shadow: 0 3px 8px rgba(0,0,0,0.04);
}
.badge {
    display: flex;
    align-items: center;
    justify-content: center;
    width: 81px;
    height: 82px;
    border-radius: 50%;
}
.blue { background-color: #0284c7; }
.orange { background-color: #f5a623; }
.purple { background-color: #9333ea; }
.green { background-color: #22c55e; }
.card-text {
    padding-left: 17px;
}
.card h2 {
    margin-top: 3px;
    font-size: 25.2px;
    line-height: 34px;
    font-weight: 700;
    letter-spacing: -0.75px;
    word-spacing: 1px;
    color: #1e2761;
}
.card p {
    margin-top: 30px;
    padding-left: 13px;
    font-family: Lato, sans-serif;
    font-size: 18.8px;
    line-height: 24px;
    color: #6b7280;
}
.bottom-rule {
    height: 8px;
    background-color: #f5a623;
}
.main-scroll {
    width: 22px;
    padding: 6px 0 0;
}
.main-scroll .bar {
    height: 111px;
    margin: 341px 0 231px;
}
.main-scroll .dbl {
    margin: 7px 0 -3px;
}

/* status bar */
.status {
    height: 29px;
    flex: none;
    display: flex;
    align-items: center;
    margin: 0 0 -5px;
    padding: 0 0 2px 10px;
    border-top: 1px solid #c4c4c4;
    background-color: #f5f5f5;
    font-size: 12.7px;
    letter-spacing: -0.12px;
    white-space: nowrap;
}
.status svg {
    fill: none;
    stroke: #333;
    stroke-width: 1.3;
}
.s-slide {
    width: 91px;
    letter-spacing: 0.05px;
}
.s-lang {
    width: 130px;
    margin-left: 21px;
}
.s-acc {
    margin: 0 3px 0 22px;
}
.status b {
    font-size: 12.6px;
    letter-spacing: -0.12px;
}
.s-right {
    display: flex;
    align-items: center;
    height: 100%;
    margin-left: auto;
    padding-right: 6px;
}
.s-nlabel {
    width: 61px;
    padding-left: 2px;
    letter-spacing: -0.25px;
}
.view {
    width: 50px;
    height: 100%;
    display: flex;
    align-items: center;
    justify-content: center;
}
.view.on {
    background-color: #dedede;
}
.s-minus {
    margin-left: 5px;
}
.slider {
    width: 125px;
    height: 1px;
    margin: 0 4px 0 6px;
    background-color: #555;
}
.slider i {
    display: block;
    width: 6px;
    height: 15px;
    margin: -7px 0 0 62px;
    background-color: #555;
}
.s-pct {
    width: 46px;
    padding-left: 15px;
    box-sizing: content-box;
    letter-spacing: -0.4px;
}

.watermark {
    position: absolute;
    z-index: 2;
    left: 846px;
    top: 904px;
    fill: #d6d6d6;
    stroke: #d6d6d6;
    opacity: 0.82;
}
.wm-ar {
    font: bold 62px "DejaVu Sans", sans-serif;
    stroke-width: 3px;
}
.wm-en {
    font: bold 35px Lato, sans-serif;
    stroke: none;
}
```
